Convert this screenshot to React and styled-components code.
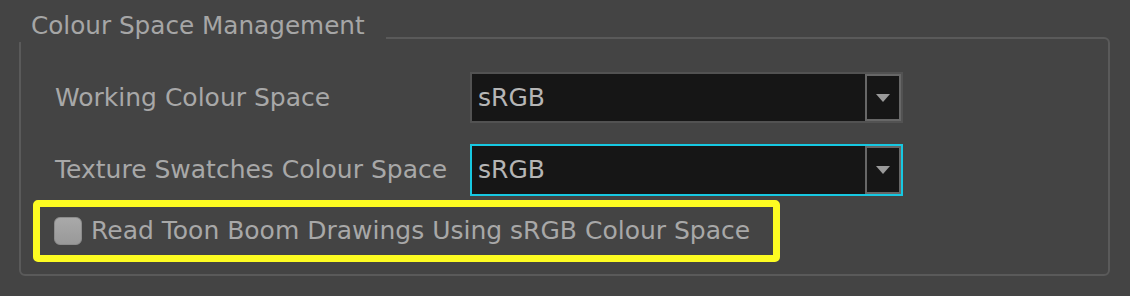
import React from "react";
import styled, { createGlobalStyle } from "styled-components";

const Global = createGlobalStyle`
  html, body {
    margin: 0;
    padding: 0;
    background: #444444;
  }
  body {
    font-family: "DejaVu Sans", "Liberation Sans", sans-serif;
    -webkit-font-smoothing: antialiased;
  }
`;

const Page = styled.div`
  width: 1130px;
  height: 296px;
  box-sizing: border-box;
  padding: 37px 0 0 19px;
  background: #444444;
`;

const GroupBox = styled.section`
  position: relative;
  box-sizing: border-box;
  width: 1091px;
  height: 239px;
  border: 2px solid #5a5a5a;
  border-radius: 6px;
  padding: 33px 0 0 12px;
`;

const GroupTitle = styled.h2`
  position: absolute;
  top: -27px;
  left: -2px;
  margin: 0;
  padding: 0 21px 0 12px;
  height: 30px;
  line-height: 28px;
  background: #444444;
  color: #a6a6a6;
  font-size: 24.7px;
  font-weight: normal;
  white-space: nowrap;
`;

const Form = styled.div`
  display: grid;
  grid-template-columns: 415px 433px;
  row-gap: 21px;
  margin-left: 22px;
  align-items: center;
`;

const Label = styled.div`
  color: #a8a8a8;
  font-size: 25px;
  line-height: 28px;
  white-space: nowrap;
`;

const Combo = styled.div`
  box-sizing: border-box;
  height: ${(p) => (p.$focused ? 52 : 51)}px;
  display: flex;
  align-items: center;
  background: #161616;
  border: 2px solid ${(p) => (p.$focused ? "#17c8e2" : "#525252")};
`;

const ComboText = styled.div`
  flex: 1;
  padding-left: 6px;
  color: #b5b5b5;
  font-size: 25px;
  line-height: 28px;
`;

const ComboButton = styled.div`
  box-sizing: border-box;
  width: 36px;
  align-self: stretch;
  border: 2px solid #676767;
  display: flex;
  align-items: center;
  justify-content: center;
  background: #161616;
`;

const CheckRow = styled.label`
  margin-top: 4px;
  display: inline-flex;
  align-items: center;
  box-sizing: border-box;
  height: 62px;
  width: 747px;
  border: 7px solid #fdfc22;
  border-radius: 5px;
  padding-left: 14px;
  gap: 9px;
`;

const Box = styled.span`
  box-sizing: border-box;
  width: 28px;
  height: 28px;
  border-radius: 6px;
  background: linear-gradient(#a9a9a9, #999999);
  border: 1px solid #8c8c8c;
  flex: none;
`;

const CheckText = styled.span`
  color: #a8a8a8;
  font-size: 25px;
  line-height: 28px;
  white-space: nowrap;
`;

const Arrow = () => (
  <svg width="16" height="10" viewBox="0 0 16 10">
    <polygon points="1,1 15,1 8,9" fill="#9a9a9a" />
  </svg>
);

const Select = ({ value, focused }) => (
  <Combo $focused={focused}>
    <ComboText>{value}</ComboText>
    <ComboButton>
      <Arrow />
    </ComboButton>
  </Combo>
);

export default function App() {
  return (
    <>
      <Global />
      <Page>
        <GroupBox>
          <GroupTitle>Colour Space Management</GroupTitle>
          <Form>
            <Label>Working Colour Space</Label>
            <Select value="sRGB" />
            <Label>Texture Swatches Colour Space</Label>
            <Select value="sRGB" focused />
          </Form>
          <CheckRow>
            <Box />
            <CheckText>Read Toon Boom Drawings Using sRGB Colour Space</CheckText>
          </CheckRow>
        </GroupBox>
      </Page>
    </>
  );
}
